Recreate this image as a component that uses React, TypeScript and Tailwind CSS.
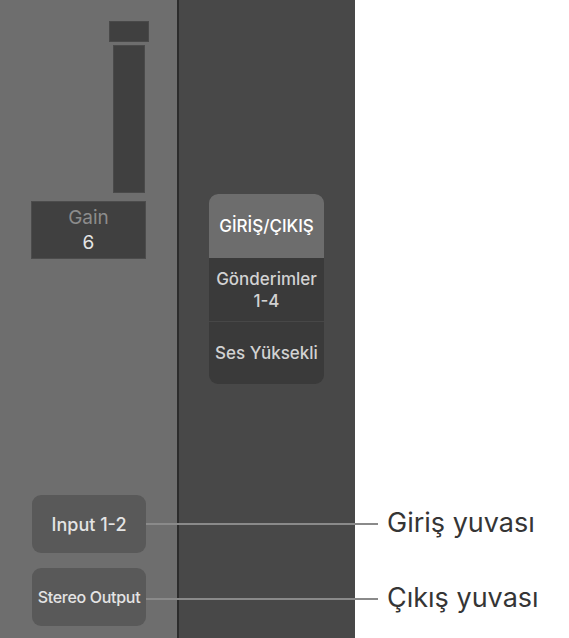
import React from "react";

export default function App() {
  const font = { fontFamily: "Inter, 'Noto Sans', sans-serif" };
  return (
    <div className="relative flex h-[638px] w-[569px] overflow-hidden bg-white" style={font}>
      {/* Left channel strip */}
      <div className="flex h-full w-[177px] flex-col bg-[#6e6e6e]">
        <div className="flex flex-col items-end pr-[28px] pt-[21px]">
          <div className="h-[21px] w-[40px] border border-[#494949] bg-[#404040]" />
          <div className="mr-[4px] mt-[3px] h-[148px] w-[32px] border border-[#4a4a4a] bg-[#404040]" />
        </div>
        <div className="ml-[31px] mt-[8px] flex h-[58px] w-[115px] flex-col items-center justify-center border border-[#4c4c4c] bg-[#404040] leading-[25px]">
          <span className="text-[19px] text-[#8c8c8c]">Gain</span>
          <span className="text-[19px] text-[#e6e6e6]">6</span>
        </div>
        <div className="ml-[32px] mt-[236px] flex flex-col gap-[15px]">
          <div className="flex h-[58px] w-[114px] items-center justify-center rounded-[9px] bg-[#595959] text-[18px] font-medium text-[#e4e4e4]">
            Input 1-2
          </div>
          <div className="flex h-[58px] w-[114px] items-center justify-center rounded-[9px] bg-[#595959] text-[16px] font-medium tracking-[-0.3px] text-[#e4e4e4]">
            Stereo Output
          </div>
        </div>
      </div>
      {/* Divider */}
      <div className="h-full w-[2px] bg-[#2c2c2c]" />
      {/* Right panel */}
      <div className="h-full w-[176px] bg-[#484848] pl-[30px] pt-[194px]">
        <div className="flex w-[115px] flex-col overflow-hidden rounded-[9px] bg-[#3a3a3a] text-center text-[17px] font-medium leading-[22px]">
          <div className="flex h-[64px] items-center justify-center bg-[#6d6d6d] text-white">
            GİRİŞ/ÇIKIŞ
          </div>
          <div className="flex h-[63px] flex-col items-center justify-center text-[#d2d2d2]">
            <span>Gönderimler</span>
            <span>1-4</span>
          </div>
          <div className="h-px bg-[#474747]" />
          <div className="flex h-[62px] items-center justify-center text-[#d2d2d2]">
            Ses Yüksekli
          </div>
        </div>
      </div>
      {/* Callouts */}
      <div className="absolute left-[146px] top-[523px] h-[2px] w-[232px] bg-[#8a8a8a]" />
      <div className="absolute left-[146px] top-[598px] h-[2px] w-[232px] bg-[#8a8a8a]" />
      <div className="absolute left-[387px] top-[505px] text-[27px] leading-[36px] text-[#353535]">Giriş yuvası</div>
      <div className="absolute left-[387px] top-[580px] text-[27px] leading-[36px] text-[#353535]">Çıkış yuvası</div>
    </div>
  );
}
